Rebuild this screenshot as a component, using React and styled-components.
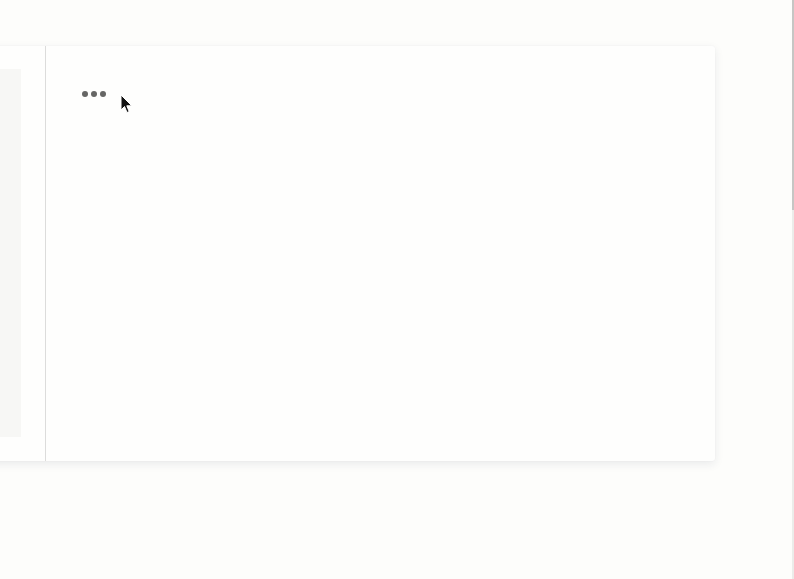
import React from "react";
import styled, { createGlobalStyle } from "styled-components";

const Global = createGlobalStyle`
  html, body { margin: 0; padding: 0; background: #fdfdfb; overflow: hidden; }
  body { font-family: "Liberation Sans", Arial, sans-serif; width: 794px; height: 579px; }
`;

const Page = styled.div`
  position: relative;
  width: 794px;
  height: 579px;
  padding-top: 46px;
  box-sizing: border-box;
  overflow: hidden;
`;

const Card = styled.div`
  display: flex;
  margin-left: -299px;
  width: 1014px;
  height: 415px;
  background: #fefefd;
  border-radius: 0 3px 3px 0;
  box-shadow: 0 3px 10px rgba(30, 40, 80, 0.09), 0 0 2px rgba(0, 0, 0, 0.04);
`;

const Sidebar = styled.div`
  width: 345px;
  flex-shrink: 0;
  box-sizing: border-box;
  padding: 23px 24px 24px 24px;
  border-right: 1px solid #dcdcdb;
  display: flex;
`;

const SideBox = styled.div`
  flex: 1;
  background: #f7f7f5;
`;

const Main = styled.div`
  flex: 1;
  padding: 43px 0 0 36px;
  display: flex;
  align-items: flex-start;
`;

const Dots = styled.button`
  display: flex;
  gap: 3px;
  padding: 0;
  border: none;
  background: none;
  margin-top: 2px;
`;

const Dot = styled.span`
  width: 6px;
  height: 6px;
  border-radius: 50%;
  background: #666664;
`;

const Cursor = styled.svg`
  position: absolute;
  left: 120px;
  top: 94px;
`;

const Scrollbar = styled.div`
  position: absolute;
  right: 0;
  top: 0;
  width: 2px;
  height: 579px;
  background: #ececea;
`;

const Thumb = styled.div`
  width: 2px;
  height: 210px;
  background: #c6c6c4;
`;

export default function App() {
  return (
    <>
      <Global />
      <Page>
        <Card>
          <Sidebar>
            <SideBox />
          </Sidebar>
          <Main>
            <Dots aria-label="More">
              <Dot />
              <Dot />
              <Dot />
            </Dots>
          </Main>
        </Card>
        <Cursor width="14" height="20" viewBox="0 0 14 20">
          <path d="M1 1 L1 16 L4.5 12.5 L7 18.5 L9.2 17.6 L6.8 11.8 L11.8 11.8 Z" fill="#111" stroke="#fff" strokeWidth="1" strokeLinejoin="round" />
        </Cursor>
        <Scrollbar>
          <Thumb />
        </Scrollbar>
      </Page>
    </>
  );
}
